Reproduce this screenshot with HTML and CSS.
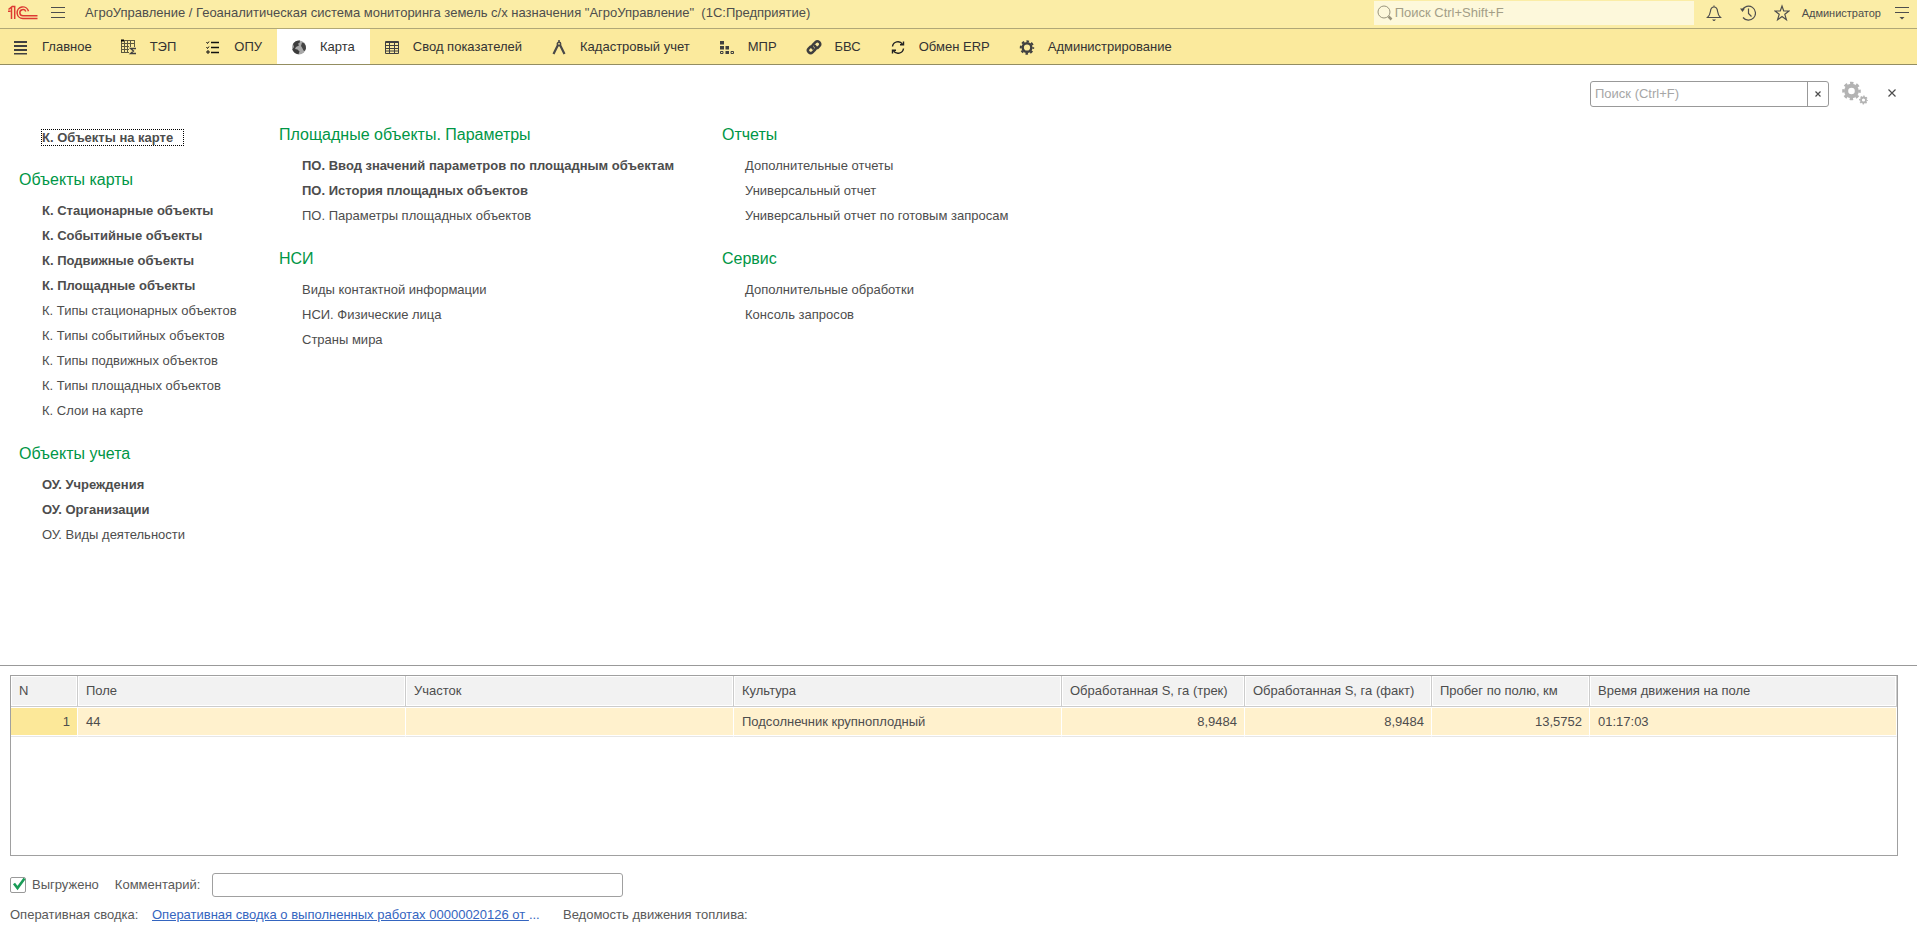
FILE: index.html
```html
<!DOCTYPE html>
<html lang="ru">
<head>
<meta charset="utf-8">
<title>АгроУправление</title>
<link rel="stylesheet" href="styles.css">
</head>
<body>
<header class="titlebar">
  <svg class="logo" width="30" height="16" viewBox="0 0 30 16" fill="none" stroke="#dd3a32" stroke-width="1.5">
    <path d="M.5 4.500 3.500 2V14M0 6.200H2.500M6.700 14V1.500H4"/>
    <path d="M20.500 6.200A5.800 5.800 0 1 0 15 13.500H29.500"/>
    <path d="M17.800 6.500A3.100 3.100 0 1 0 15 10.800H29.500"/>
  </svg>
  <button class="icon-btn burger" aria-label="Меню">
    <svg width="14" height="12" viewBox="0 0 14 12" stroke="#4d4d4d"><path d="M0 .5H14M0 5.5H14M0 10.5H14"/></svg>
  </button>
  <h1 class="app-title">АгроУправление / Геоаналитическая система мониторинга земель с/х назначения "АгроУправление" &nbsp;(1С:Предприятие)</h1>
  <label class="global-search">
    <svg width="16" height="16" viewBox="0 0 16 16" fill="none" stroke="#99947c"><circle cx="7" cy="7" r="6"/><path d="M11.5 11.5 14.5 14.5" stroke-width="2.5"/></svg>
    <input class="global-input" type="text" placeholder="Поиск Ctrl+Shift+F" aria-label="Поиск">
  </label>
  <div class="tools">
    <button class="icon-btn" aria-label="Уведомления">
      <svg width="16" height="18" viewBox="0 0 16 18" fill="none" stroke="#4d4d4d" stroke-width="1.2"><path d="M1.5 13.5H14.5C12.500 11.500 12 10.500 11.600 7.500 11.300 4.500 10 3 8 3S4.700 4.500 4.400 7.500C4 10.500 3.500 11.500 1.500 13.500ZM8 3V1.500"/><path d="M6 15.500H10L8.500 17H7.500Z" fill="#4d4d4d" stroke="none"/></svg>
    </button>
    <button class="icon-btn" aria-label="История">
      <svg width="16" height="18" viewBox="0 0 16 18" fill="none" stroke="#4d4d4d" stroke-width="1.200"><path d="M2.200 6A7 7 0 1 1 3 13.500M8.500 4.500V9.500L11.500 12.500"/><path d="M0 4.500H5L2.500 8Z" fill="#4d4d4d" stroke="none"/></svg>
    </button>
    <button class="icon-btn" aria-label="Избранное">
      <svg width="16" height="18" viewBox="0 0 16 18" fill="none" stroke="#4d4d4d" stroke-width="1.200"><path d="M8 2 9.700 7H15L10.800 10.300 12.400 15.700 8 12.400 3.600 15.700 5.200 10.300 1 7H6.300Z"/></svg>
    </button>
    <button class="user">Администратор</button>
    <button class="icon-btn" aria-label="Настройки окна">
      <svg width="14" height="14" viewBox="0 0 14 14" stroke="#4d4d4d"><path d="M0 1.500H14M0 6.500H14"/><path d="M4.500 11H9.500L7 13.500Z" fill="#4d4d4d" stroke="none"/></svg>
    </button>
  </div>
</header>

<nav class="sections">
  <a class="section section-first" href="#"><svg class="ico" viewBox="0 0 16 16" fill="#404040"><path d="M1 2H14V4H1ZM1 6H14V8H1ZM1 10H14V12H1ZM1 14H14V15.500H1Z"/></svg>Главное</a>
  <a class="section" href="#"><svg class="ico" viewBox="0 0 16 16" fill="none" stroke="#5c583f"><path d="M0 1.500H14M.5 1V14M3.500 1V14M6.500 1V14M9.500 1V8M13.500 1V8M0 4.500H14M0 7.500H8M0 10.500H8M0 13.500H8"/><path d="M15 9.500H9.500L12.500 12 9.500 14.500H15" stroke="#404040" stroke-width="1.300"/><path d="M0 1.500H3" stroke="#000" stroke-width="2"/></svg>ТЭП</a>
  <a class="section" href="#"><svg class="ico" viewBox="0 0 16 16" fill="none" stroke="#111"><path d="M6 3.500H14M6 8.500H14M6 13.500H14" stroke-width="1.300"/><path d="M1.500 3 2.500 4.500 4 2.500M1.500 8 2.500 9.500 4 7.500"/><path d="M2 12H4V14H2Z"/></svg>ОПУ</a>
  <a class="section section-active" href="#"><svg class="ico" viewBox="0 0 16 16"><circle cx="8" cy="8.500" r="7" fill="#a8a8a8"/><path d="M2 5Q4.500 1.300 9 1.600L8.500 4 7 4.500 8 6.500 5 8 4 10 6.500 10.500 8.500 12.500 7.500 15.300Q3 14.500 1.300 10.500L3 8Z" fill="#3c3c3c"/><path d="M11 3.500 13.300 4.200Q15.300 7 15 9.500L13.800 12 12.500 11.500 11 8.500 10 7Z" fill="#444"/></svg>Карта</a>
  <a class="section" href="#"><svg class="ico" viewBox="0 0 16 16" fill="none" stroke="#404040"><path d="M1.500 2.500H14.500V14.500H1.500ZM1 3.500H15M1 6.500H15M1 9.500H15M1 12H15M5.500 3V14M10.500 3V14"/></svg>Свод показателей</a>
  <a class="section" href="#"><svg class="ico" viewBox="0 0 16 16" fill="none" stroke="#484848"><path d="M8 1V3.500" stroke-width="1.500"/><path d="M7.200 5.500 2.500 15M8.800 5.500 13.500 15" stroke-width="2.200"/><circle cx="8" cy="5" r="1.700" stroke-width="1.500"/></svg>Кадастровый учет</a>
  <a class="section" href="#"><svg class="ico" viewBox="0 0 16 16" fill="#404040"><path d="M1 2H5V5.500H1ZM1 7H5V10.500H1ZM6.500 7H10V10.500H6.500ZM6.500 12H10V15H6.500Z"/><path d="M1.500 12.500H4V14.500H1.500ZM12 12.500H14.500V14.500H12Z" fill="none" stroke="#404040"/></svg>МПР</a>
  <a class="section" href="#"><svg class="ico" viewBox="0 0 16 16" fill="none" stroke="#3f3f3f" stroke-width="2.500" stroke-linecap="round"><path d="M7 9.500C5.800 8.300 5.800 6.800 7 5.600L9.500 3.100C11.900.7 16 4.400 13.500 7L11.500 9"/><path d="M9 6.900C10.200 8.100 10.200 9.600 9 10.800L6.500 13.300C4.100 15.700.3 12 2.600 9.500L4.500 7.600"/></svg>БВС</a>
  <a class="section" href="#"><svg class="ico" viewBox="0 0 16 16" fill="none" stroke="#222" stroke-width="1.400"><path d="M2.500 7.500A5.500 5.500 0 0 1 12.500 5.200M13.500 9.500A5.500 5.500 0 0 1 3.500 11.800"/><path d="M13.500 2.500V5.800H10M2.500 14.500V11.200H6"/></svg>Обмен ERP</a>
  <a class="section" href="#"><svg class="ico" viewBox="0 0 16 16" fill="none" stroke="#404040"><circle cx="8" cy="8.500" r="4.300" stroke-width="2.400"/><circle cx="8" cy="8.500" r="6.200" stroke-width="2" stroke-dasharray="2.600 2.270" stroke-dashoffset="1.300"/></svg>Администрирование</a>
</nav>

<main class="panel">
  <div class="panel-tools">
    <div class="find">
      <input class="find-input" type="text" placeholder="Поиск (Ctrl+F)" aria-label="Поиск по разделу">
      <button class="find-clear" aria-label="Очистить"><svg width="8" height="8" viewBox="0 0 8 8" stroke="#4d4d4d" stroke-width="1.200"><path d="M1.500 1.500 6.500 6.500M6.500 1.500 1.500 6.500"/></svg></button>
    </div>
    <button class="icon-btn gear" aria-label="Настройка">
      <svg width="26" height="26" viewBox="0 0 26 26" fill="none" stroke="#b3b3b3"><circle cx="9.500" cy="10" r="5.300" stroke-width="4"/><circle cx="9.500" cy="10" r="8" stroke-width="2.600" stroke-dasharray="3.400 2.883" stroke-dashoffset="1.700"/><circle cx="21.500" cy="19" r="2.500" stroke-width="1.800"/><circle cx="21.500" cy="19" r="3.700" stroke-width="1.400" stroke-dasharray="1.500 1.406" stroke-dashoffset=".7"/></svg>
    </button>
    <button class="icon-btn" aria-label="Закрыть"><svg width="10" height="12" viewBox="0 0 10 12" stroke="#4d4d4d" stroke-width="1.200"><path d="M1.500 1.500 8.500 8.500M8.500 1.500 1.500 8.500"/></svg></button>
  </div>

  <div class="columns">
    <div class="column">
      <ul class="links">
        <li><a class="main focused" href="#">К. Объекты на карте</a></li>
      </ul>
      <section class="group">
        <h2>Объекты карты</h2>
        <ul class="links">
          <li><a class="main" href="#">К. Стационарные объекты</a></li>
          <li><a class="main" href="#">К. Событийные объекты</a></li>
          <li><a class="main" href="#">К. Подвижные объекты</a></li>
          <li><a class="main" href="#">К. Площадные объекты</a></li>
          <li><a href="#">К. Типы стационарных объектов</a></li>
          <li><a href="#">К. Типы событийных объектов</a></li>
          <li><a href="#">К. Типы подвижных объектов</a></li>
          <li><a href="#">К. Типы площадных объектов</a></li>
          <li><a href="#">К. Слои на карте</a></li>
        </ul>
      </section>
      <section class="group">
        <h2>Объекты учета</h2>
        <ul class="links">
          <li><a class="main" href="#">ОУ. Учреждения</a></li>
          <li><a class="main" href="#">ОУ. Организации</a></li>
          <li><a href="#">ОУ. Виды деятельности</a></li>
        </ul>
      </section>
    </div>
    <div class="column">
      <section class="group">
        <h2>Площадные объекты. Параметры</h2>
        <ul class="links">
          <li><a class="main" href="#">ПО. Ввод значений параметров по площадным объектам</a></li>
          <li><a class="main" href="#">ПО. История площадных объектов</a></li>
          <li><a href="#">ПО. Параметры площадных объектов</a></li>
        </ul>
      </section>
      <section class="group">
        <h2>НСИ</h2>
        <ul class="links">
          <li><a href="#">Виды контактной информации</a></li>
          <li><a href="#">НСИ. Физические лица</a></li>
          <li><a href="#">Страны мира</a></li>
        </ul>
      </section>
    </div>
    <div class="column">
      <section class="group">
        <h2>Отчеты</h2>
        <ul class="links">
          <li><a href="#">Дополнительные отчеты</a></li>
          <li><a href="#">Универсальный отчет</a></li>
          <li><a href="#">Универсальный отчет по готовым запросам</a></li>
        </ul>
      </section>
      <section class="group">
        <h2>Сервис</h2>
        <ul class="links">
          <li><a href="#">Дополнительные обработки</a></li>
          <li><a href="#">Консоль запросов</a></li>
        </ul>
      </section>
    </div>
  </div>
</main>

<section class="document">
  <div class="grid-box">
    <table class="grid">
      <colgroup>
        <col class="w-n"><col class="w-name"><col class="w-name"><col class="w-name"><col class="w-track"><col class="w-fact"><col class="w-run"><col>
      </colgroup>
      <thead>
        <tr><th>N</th><th>Поле</th><th>Участок</th><th>Культура</th><th>Обработанная S, га (трек)</th><th>Обработанная S, га (факт)</th><th>Пробег по полю, км</th><th>Время движения на поле</th></tr>
      </thead>
      <tbody>
        <tr><td class="num current">1</td><td>44</td><td></td><td>Подсолнечник крупноплодный</td><td class="num">8,9484</td><td class="num">8,9484</td><td class="num">13,5752</td><td>01:17:03</td></tr>
      </tbody>
    </table>
  </div>
  <div class="form-row">
    <label class="check">
      <span class="check-box">
        <input type="checkbox" checked>
        <svg class="tick" width="14" height="14" viewBox="0 0 14 14" fill="none" stroke="#1a9c57" stroke-width="2.600"><path d="M2 6.500 5.500 11 12.500 1.500"/></svg>
      </span>
      Выгружено
    </label>
    <label class="comment-label" for="comment">Комментарий:</label>
    <input id="comment" class="comment" type="text">
  </div>
  <div class="info-row">
    <span class="report-label">Оперативная сводка:</span>
    <span class="report"><a href="#">Оперативная сводка о выполненных работах 00000020126 от&nbsp;</a>...</span>
    <span>Ведомость движения топлива:</span>
  </div>
</section>
</body>
</html>
```
FILE: styles.css
```css
* {
  box-sizing: border-box;
}

body {
  margin: 0;
  min-height: 100vh;
  display: flex;
  flex-direction: column;
  background: #fff;
  color: #4d4d4d;
  font: 13px/20px "Liberation Sans", Arial, sans-serif;
}

button,
input {
  font: inherit;
  color: inherit;
}

button {
  padding: 0;
  border: 0;
  background: none;
}

svg {
  display: block;
  flex: none;
}

a {
  color: inherit;
  text-decoration: none;
}

/* Title bar */
.titlebar {
  display: flex;
  align-items: center;
  height: 29px;
  padding: 0 8px 2px;
  background: #fbeda6;
  border-bottom: 1px solid #b0a877;
}

.burger {
  margin: 0 20px 0 13px;
}

.app-title {
  margin: 0;
  flex: 1;
  font-size: 13px;
  font-weight: normal;
  white-space: nowrap;
}

.global-search {
  display: flex;
  align-items: center;
  gap: 2px;
  width: 320px;
  height: 24px;
  padding-left: 3px;
  background: #fdf8db;
}

.global-input {
  flex: 1;
  min-width: 0;
  padding: 0;
  border: 0;
  background: none;
}

.global-input::placeholder {
  color: #a39e87;
}

.tools {
  display: flex;
  align-items: center;
  gap: 14px;
  margin-left: 12px;
}

.tools .icon-btn + .icon-btn {
  margin-left: 4px;
}

.user {
  margin-left: -2px;
  font-size: 11px;
}

/* Section navigation */
.sections {
  display: flex;
  height: 36px;
  background: #fbea9d;
  border-bottom: 1px solid #938d61;
  color: #333;
}

.section {
  display: flex;
  align-items: center;
  padding: 0 15px 0 14px;
  white-space: nowrap;
}

.section-first {
  padding-left: 13px;
}

.section-active {
  background: #fff;
}

.ico {
  width: 16px;
  height: 16px;
  margin-right: 13px;
}

/* Section panel */
.panel {
  flex: 1;
  padding: 16px 20px 0 19px;
}

.panel-tools {
  display: flex;
  align-items: center;
  justify-content: flex-end;
  height: 26px;
}

.find {
  display: flex;
  width: 239px;
  height: 26px;
  border: 1px solid #999;
  border-radius: 3px;
}

.find-input {
  flex: 1;
  min-width: 0;
  padding: 0 4px;
  border: 0;
  background: none;
}

.find-input::placeholder {
  color: #a6a6a6;
}

.find-clear {
  display: flex;
  align-items: center;
  justify-content: center;
  width: 21px;
  border-left: 1px solid #999;
}

.gear {
  margin: 0 19px 0 13px;
}

.columns {
  display: grid;
  grid-template-columns: 260px 443px auto;
  padding-top: 18px;
}

.group + .group {
  margin-top: 21px;
}

.links + .group {
  margin-top: 20px;
}

.group h2 {
  margin: 0 0 8px;
  color: #009646;
  font-size: 16px;
  font-weight: normal;
  line-height: 20px;
}

.links {
  margin: 0;
  padding: 0 0 0 23px;
  list-style: none;
  line-height: 25px;
  white-space: nowrap;
}

.main {
  font-weight: bold;
}

.focused {
  padding-right: 10px;
  outline: 1px dotted #000;
}

/* Document area */
.document {
  padding: 9px 19px 6px 10px;
  border-top: 1px solid #999;
}

.grid-box {
  min-height: 181px;
  border: 1px solid #a0a0a0;
}

.grid {
  width: 100%;
  table-layout: fixed;
  border-collapse: separate;
  border-spacing: 0;
  white-space: nowrap;
}

.w-n {
  width: 67px;
}

.w-name {
  width: 328px;
}

.w-track {
  width: 183px;
}

.w-fact {
  width: 187px;
}

.w-run {
  width: 158px;
}

.grid th {
  height: 31px;
  padding: 0 8px;
  background: #f2f2f2;
  border-right: 1px solid #ccc;
  border-bottom: 1px solid #ccc;
  box-shadow: inset 0 0 0 1px #fff;
  font-weight: normal;
  text-align: left;
}

.grid td {
  height: 30px;
  padding: 0 8px;
  background: #fff1cd;
  border-right: 1px solid #fff;
  border-bottom: 1px solid #e6e6e6;
  box-shadow: inset 0 1px #fff, inset 0 -1px #fff;
}

.grid .num {
  padding-right: 7px;
  text-align: right;
}

.grid .current {
  background: #fce899;
}

.form-row,
.info-row {
  display: flex;
  align-items: center;
  color: #595959;
  white-space: nowrap;
}

.form-row {
  gap: 10px;
  margin-top: 17px;
}

.check {
  display: flex;
  align-items: center;
  gap: 6px;
  margin-right: 6px;
}

.check-box {
  position: relative;
}

.check-box input {
  display: block;
  appearance: none;
  width: 16px;
  height: 16px;
  margin: 0;
  border: 1px solid #999;
  border-radius: 2px;
}

.tick {
  position: absolute;
  top: 0;
  left: 2px;
}

.comment-label {
  min-width: 87px;
}

.comment {
  width: 411px;
  height: 24px;
  padding: 0 6px;
  border: 1px solid #a0a0a0;
  border-radius: 3px;
}

.info-row {
  gap: 11px;
  margin-top: 8px;
}

.report-label {
  min-width: 131px;
}

.report {
  min-width: 400px;
  color: #3465c0;
}

.report a {
  text-decoration: underline;
}
```
